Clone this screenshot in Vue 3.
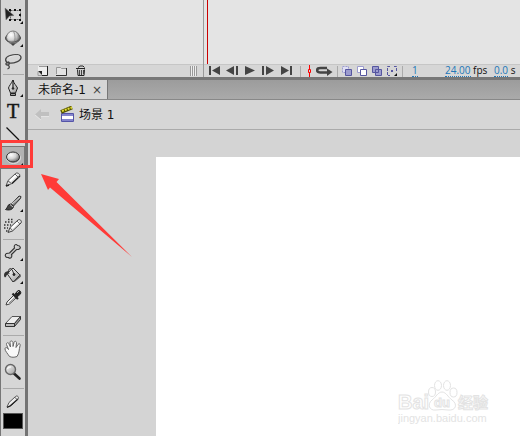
<script setup>
const tools = [
  ['transform', 'sphere', 'lasso'],
  ['pen', 'text', 'line', 'oval', 'pencil', 'brush', 'spray'],
  ['bone', 'bucket', 'dropper', 'eraser'],
  ['hand', 'zoom'],
]
const labels = {
  transform: 'Free Transform', sphere: '3D Rotation', lasso: 'Lasso', pen: 'Pen', text: 'Text', line: 'Line',
  oval: 'Oval', pencil: 'Pencil', brush: 'Brush', spray: 'Deco', bone: 'Bone', bucket: 'Paint Bucket',
  dropper: 'Eyedropper', eraser: 'Eraser', hand: 'Hand', zoom: 'Zoom',
}
const flyout = ['transform', 'sphere', 'pen', 'oval', 'brush', 'bone', 'bucket']
const playback = [
  { label: 'First frame', d: 'M1 1h2v9h-2zM12 1v9L4 5.5z' },
  { label: 'Step back', d: 'M0 5.5L8 1v9zM10 1h2v9h-2z' },
  { label: 'Play', d: 'M1 1L11 5.5L1 10z' },
  { label: 'Step forward', d: 'M0 1h2v9h-2zM4 1L12 5.5L4 10z' },
  { label: 'Last frame', d: 'M1 1L9 5.5L1 10zM10 1h2v9h-2z' },
]
</script>

<template>
  <div class="app">
    <svg class="defs" width="0" height="0" aria-hidden="true">
      <defs>
        <radialGradient id="ball" cx=".35" cy=".3" r=".75"><stop offset="0" stop-color="#fff" /><stop offset=".5" stop-color="#d4d4d4" /><stop offset="1" stop-color="#666" /></radialGradient>
        <linearGradient id="metal" x2="1" y2="1"><stop offset="0" stop-color="#fff" /><stop offset="1" stop-color="#999" /></linearGradient>
      </defs>
    </svg>
    <aside class="toolbar">
      <div v-for="(group, g) in tools" :key="g" class="group" :class="'group' + g">
        <button v-for="t in group" :key="t" class="tool" :class="{ active: t === 'oval' }" :aria-label="labels[t]">
          <svg width="24" height="23" viewBox="0 0 24 23" fill="none" stroke="#222">
            <g v-if="t === 'transform'">
              <path d="M9.5 6.5h10v9h-10z" stroke-dasharray="2 1" stroke="#666" />
              <path d="M8 5h2v2h-2zM13 5h2v2h-2zM18 5h2v2h-2zM18 10h2v2h-2zM18 15h2v2h-2zM13 15h2v2h-2zM8 15h2v2h-2z" fill="#111" stroke="none" />
              <path d="M4 4L13 11.5L8.5 12L5 16z" fill="#222" stroke="#777" stroke-width=".5" />
            </g>
            <g v-else-if="t === 'sphere'">
              <ellipse cx="12" cy="11" rx="7.5" ry="4.5" fill="#888" stroke="#444" />
              <circle cx="12" cy="10.5" r="6.5" fill="url(#ball)" stroke="#666" stroke-width=".8" />
              <path d="M4.5 11.5C6 15 10 15.500 13 15S18.500 13 19.500 11" stroke="#555" />
              <path d="M12.500 4.500C14.500 8 14.500 13 12.500 18" stroke="#777" stroke-width=".7" />
              <path d="M9.500 16.500h5L12 19z" fill="#444" stroke="none" />
            </g>
            <g v-else-if="t === 'lasso'" stroke="#444" stroke-width="1.3">
              <path d="M7.5 13C3 11 4 7 9 5.5S20 4 20 7.5S13 14 7.5 13C4.5 12 4 15 6.5 15S9 12 7 12M6.500 15C9 16 9 18 6.500 19" />
              <path d="M8 7.500C12 5.500 17 4.500 18.500 6.500" stroke="#eee" stroke-width=".7" />
            </g>
            <g v-else-if="t === 'pen'">
              <path d="M12 3C10 7 8 9 7.5 11L9.5 16h5L16.5 11C15 8 13 7 12 3z" fill="url(#metal)" />
              <path d="M12 3v8" stroke-width="1.2" /><circle cx="12" cy="11.5" r=".8" fill="#111" />
              <path d="M9.500 16.500h5v2h-5z" fill="#222" /><path d="M10 17.500h4" stroke="#999" />
            </g>
            <path v-else-if="t === 'line'" d="M5.5 4.5L18 17" stroke="#111" stroke-width="1.2" />
            <g v-else-if="t === 'oval'"><ellipse cx="12.500" cy="12" rx="7" ry="5.5" stroke="#ddd" /><ellipse cx="12" cy="11" rx="6.5" ry="5" fill="url(#ball)" stroke="#333" /></g>
            <g v-else-if="t === 'pencil'">
              <path d="M5 17L7 11.5L14.5 4.5C16 3 20 5 18.5 7.5L11 14.5z" fill="#ddd" stroke="#555" />
              <path d="M9 12L16 5.5" stroke="#fff" stroke-width="2" /><path d="M11 14.5L19 7M5 17l3-1" stroke="#222" stroke-width="1.4" /><path d="M14 5l3.500 3.500M7 12l3.500 2.500" stroke="#666" />
            </g>
            <g v-else-if="t === 'brush'">
              <path d="M10.5 12L18 4L20 4.5L19.5 6.5L12.5 14z" fill="#888" stroke="#333" /><path d="M11 12L19 5" stroke="#ddd" />
              <path d="M4.5 17.5C7 16 6 12.500 9.500 12L12.500 14.500C12 18 7.500 18.500 4.500 17.500z" fill="#444" /><path d="M9 12.500l3 2.500" stroke="#ccc" />
            </g>
            <g v-else-if="t === 'spray'">
              <path d="M4 7h8M3 10h7M3 13h4M5 16h2M7 4.500h6" stroke="#333" stroke-width="1.5" stroke-dasharray="1.500 1.500" />
              <path d="M7 17.500L9 12.500L17 5C18.500 3.500 21.500 6 20 8L11.500 16z" fill="#ddd" stroke="#444" /><path d="M11 13L18 6.500" stroke="#fff" stroke-width="2" /><path d="M16 6l3 3M9 13l3 3" stroke="#777" />
            </g>
            <path v-else-if="t === 'bone'" d="M8.5 12L13.5 7C12.5 4 15 2.500 16.500 4.500C19.500 4.500 20.500 7.500 17.500 8.500L15.500 8.500L10.500 13.500C11.500 16 9.500 18.500 7.500 16.500C4 17 3.500 13.500 5.500 12.500z" fill="url(#metal)" stroke="#333" stroke-width="1.1" />
            <g v-else-if="t === 'bucket'">
              <path d="M6 9.5L12 4L19 11L12 18z" fill="url(#metal)" stroke="#333" /><path d="M8 10C6 6 9 3 11 5.5L13 10" stroke="#333" />
              <path d="M9 7C5 7 3 8.500 3 11C3 14 5 14 5.500 11.500L7.500 9z" fill="#333" stroke="none" /><circle cx="13" cy="10.5" r="1" fill="#222" /><path d="M19 10.500v2L13 17.500" stroke="#555" stroke-width="1.5" />
            </g>
            <g v-else-if="t === 'dropper'">
              <path d="M5 18L6 15L13 8L15.5 10.5L8.5 17z" fill="#eee" stroke="#444" /><path d="M8 16L15 9.5" stroke="#888" />
              <path d="M11.5 6.5L17 12" stroke-width="2.2" /><path d="M14 7L17 3.5C19 3 20.5 5 19.5 7L16 10z" fill="#222" /><path d="M16 6l2-2" stroke="#aaa" />
            </g>
            <g v-else-if="t === 'eraser'">
              <path d="M4.5 13.5L11 6.5h8.5L13.5 13.5z" fill="#eee" stroke="#555" /><path d="M4.5 13.5v3h9v-3zM13.5 16.5L19.5 9.5v-3L13.5 13.5z" fill="#999" stroke="#333" /><path d="M5 15h8" stroke="#ddd" />
            </g>
            <path v-else-if="t === 'hand'" d="M8.5 18.5C7 16 4 13 4 11C4 9 6 9 7.5 11.5L5.5 6.5C5 4.5 7.5 4 8 6L9.500 9L9 4.500C9 2.500 11.500 2.500 12 4.500v4L13 4.500C13.500 2.500 15.500 3 15.500 5L15 9.500L17 6.500C18 5 20 6 19 8C18 11 18.500 15 16 18.500C13 19.500 11 19.500 8.500 18.500z" fill="#f8f8f8" stroke="#666" />
            <g v-else-if="t === 'zoom'">
              <path d="M12.5 12L18.500 17.500" stroke="#222" stroke-width="2.600" stroke-linecap="round" /><circle cx="9.5" cy="8.5" r="5" fill="url(#metal)" stroke="#666" stroke-width="1.4" /><path d="M6.500 8C7 6.500 8.500 6 10 6" stroke="#fff" />
            </g>
            <path v-if="flyout.includes(t)" d="M22 17v3h-3z" fill="#111" stroke="none" />
          </svg>
          <span v-if="t === 'text'" class="glyph">T</span>
        </button>
      </div>
      <div class="group colors">
        <svg width="24" height="23" viewBox="0 0 24 23" fill="none"><path d="M6 16L8 11.5L14.5 5.5C16 4 18.5 6 17 8L10.5 14.5z" fill="#eee" stroke="#555" /><path d="M6 16.500l3-1.500L17 8" stroke="#222" stroke-width="1.3" /><path d="M13.500 6l3 3" stroke="#555" /></svg>
        <button class="swatch" aria-label="Stroke color"></button>
      </div>
    </aside>

    <main class="work">
      <section class="timeline">
        <div class="layers">
          <div class="rows"></div>
          <div class="bar layerbar">
            <button aria-label="New layer"><svg width="12" height="12" viewBox="0 0 12 12"><path d="M1 1h9v9H5L1 6z" fill="#eee" /><path d="M10.5 1v9.5H4" fill="none" stroke="#222" /><path d="M1 6h4v4z" fill="#222" /><path d="M2 1.5h8M1 6.500v4h4" fill="none" stroke="#999" /></svg></button>
            <button aria-label="New folder"><svg width="12" height="12" viewBox="0 0 12 12"><path d="M1 2h4l1 2h5v6H1z" fill="#e3e3e3" /><path d="M.5 9V2.500h4l1 1h5" fill="none" stroke="#999" /><path d="M10.5 3v7.500H0" fill="none" stroke="#333" /></svg></button>
            <button aria-label="Delete"><svg width="12" height="12" viewBox="0 0 12 12" fill="none" stroke="#222"><path d="M1 3.5h9M3 2.500L5 1h3l1.500 1.500" /><path d="M2.500 4.500l.5 6h6l.5-6" fill="#ccc" /><path d="M4.500 5v5M6.500 5v5M8.500 5v4" stroke="#444" /></svg></button>
            <span class="grip"></span>
          </div>
        </div>
        <div class="frames">
          <div class="rows"><i class="playhead"></i></div>
          <div class="bar framebar">
            <div class="play">
              <button v-for="p in playback" :key="p.label" :aria-label="p.label"><svg width="12" height="12" viewBox="0 0 12 12"><path :d="p.d" fill="#444" /></svg></button>
            </div>
            <i class="rule"></i>
            <button class="center" aria-label="Center frame"><svg width="5" height="12" viewBox="0 0 5 12" fill="none" stroke="#f00"><path d="M2.5 0v4M2.5 8v4M1.5 4.500h2v3h-2z" /></svg></button>
            <button aria-label="Loop"><svg width="17" height="12" viewBox="0 0 17 12"><path d="M11 3H4.5C0 3 0 7.5 4.5 7.5H12" fill="none" stroke="#444" stroke-width="2.5" /><path d="M11 3.5L16.5 7L11 11z" fill="#444" /></svg></button>
            <i class="rule"></i>
            <div class="onion">
              <button aria-label="Onion skin"><svg width="11" height="11" viewBox="0 0 11 11" stroke="#5656a0"><path d="M.5.5h6v6h-6z" fill="#e0e0f4" stroke="#9c9cce" stroke-dasharray="2 1" /><path d="M3.500 3.500h6v6h-6z" fill="#9c9cce" /></svg></button>
              <button aria-label="Onion skin outlines"><svg width="11" height="11" viewBox="0 0 11 11" stroke="#5656a0"><path d="M.5.5h6v6h-6z" fill="#fff" stroke="#9c9cce" /><path d="M3.500 3.500h6v6h-6z" fill="#fff" /></svg></button>
              <button aria-label="Edit multiple frames"><svg width="11" height="11" viewBox="0 0 11 11" stroke="#5656a0"><path d="M.5.5h6v6h-6zM3.500 3.500h6v6h-6z" fill="#9c9cce" /></svg></button>
              <button aria-label="Modify markers"><svg width="11" height="11" viewBox="0 0 11 11"><path d="M3 .5H.5v9H3M7 .5h2.500V5" fill="none" stroke="#5656a0" stroke-dasharray="3 1" /><path d="M4 4h2v2H4z" fill="#5656a0" /><path d="M10 7v3H7z" fill="#111" /></svg></button>
            </div>
            <i class="rule"></i>
            <div class="status"><span class="frame"><a href="#">1</a></span><span class="rate"><a href="#">24.00</a> fps</span><span><a href="#">0.0</a> s</span></div>
          </div>
        </div>
      </section>

      <nav class="tabs"><div class="tab"><span>未命名-1</span><button aria-label="Close">×</button></div></nav>
      <div class="scene">
        <button class="back" aria-label="Back"><svg width="14" height="12" viewBox="0 0 14 12"><path d="M0 5.500L6 0v3h8v4H6v4z" fill="#c0c0c0" /><path d="M6 11L0 6M6 7.500h8" stroke="#e4e4e4" /></svg></button>
        <svg width="15" height="17" viewBox="0 0 15 17"><path d="M1.500 7.500h12v8h-12z" fill="#fff" stroke="#5555a8" /><path d="M2 8h11v2H2zM2 13h11v2H2z" fill="#8585cc" /><path d="M1 6L12 1.500" stroke="#555500" stroke-width="4" /><path d="M2 5L12 1.500" stroke="#e2dc35" stroke-width="2" stroke-dasharray="2 1" /></svg>
        <span>场景 1</span>
      </div>
      <section class="stage">
        <div class="canvas">
          <svg class="watermark" width="94" height="46" viewBox="0 0 94 46" fill="#fff" stroke="#e3e3e3">
            <ellipse cx="34" cy="12" rx="3.5" ry="4.5" /><ellipse cx="40" cy="5.5" rx="3.5" ry="4.8" /><ellipse cx="49" cy="5.5" rx="3.5" ry="4.8" /><ellipse cx="55.500" cy="12.500" rx="3.500" ry="4.500" />
            <path d="M44 12C40 12 38 17 34 20C29 24 31 31 38 30Q44 29 50 30C58 31 60 24 54 20C50 17 48 12 44 12z" />
            <text x="0" y="29" class="logo">Bai</text><text x="36" y="27" class="du">du</text><text x="60" y="28" class="cn">经验</text><text x="0" y="42" class="url">jingyan.baidu.com</text>
          </svg>
        </div>
      </section>
    </main>

    <div class="highlight"></div>
    <svg class="pointer" width="92" height="84" viewBox="0 0 92 84"><path d="M0 0L18 5L15.500 8L91 83L9 13.500L7 16z" fill="#ff3b38" /></svg>
  </div>
</template>

<style>
body { margin: 0; }
</style>

<style scoped>
.app { position: relative; display: flex; min-height: 100vh; overflow: hidden; background: #d4d4d4; color: #111; font: 12px/14px "DejaVu Sans", "Noto Sans CJK SC", sans-serif; }
.app * { box-sizing: border-box; }
.defs { position: absolute; }
svg { display: block; flex: none; }
button { border: 0; padding: 0; margin: 0; background: none; color: inherit; font: inherit; }
.toolbar { flex: none; width: 28px; padding-top: 4px; border-left: 1px solid #777; border-right: 3px solid #737373; background: #d6d6d6; }
.group { display: flex; flex-direction: column; padding-bottom: 1px; }
.group + .group::before { content: ""; height: 1px; margin: 0 1px 2px 2px; background: #aaa; }
.group.group2::before { margin-bottom: 1px; }
.group.group2 { padding-bottom: 2px; }
.group.group3 { padding-bottom: 4px; }
.tool { position: relative; display: block; width: 24px; height: 23px; }
.tool.active { background: #b2b2b2; box-shadow: inset 0 0 0 1px #777; }
.glyph { position: absolute; inset: 0; font: 400 20px/23px "Liberation Serif", serif; text-align: center; color: #111; -webkit-text-stroke: 0.5px #222; }
.swatch { width: 20px; height: 16px; margin: -1px 0 0 2px; background: #000; border: 1px solid #555; }
.work { flex: 1; min-width: 0; display: flex; flex-direction: column; }
.timeline { display: flex; height: 80px; flex: none; border-bottom: 3px solid #777; }
.layers { width: 176px; flex: none; display: flex; flex-direction: column; border-right: 1px solid #999; }
.frames { flex: 1; min-width: 0; display: flex; flex-direction: column; }
.rows { flex: 1; background: #e4e4e4; }
.playhead { display: block; width: 1px; height: 100%; margin-left: 3px; background: #c00; }
.bar { height: 13px; display: flex; align-items: center; border-top: 1px solid #c6c6c6; background: #d6d6d6; }
.layerbar { padding: 0 6px 0 9px; gap: 7px; }
.grip { width: 7px; height: 10px; margin-left: auto; background: repeating-linear-gradient(90deg, #999 0 1px, #eee 1px 2px); }
.framebar { gap: 4px; padding-left: 4px; }
.play { display: flex; gap: 6px; margin-right: 4px; }
.center { margin-left: 2px; }
.rule { width: 1px; height: 11px; background: #aaa; }
.onion { display: flex; gap: 4px; }
.status { display: flex; padding-left: 5px; white-space: nowrap; font: 10px/11px "Open Sans", sans-serif; }
.status a { display: inline-block; height: 12px; color: #2277b8; text-decoration: none; border-bottom: 1px dotted #2277b8; }
.frame { width: 33px; }
.rate { width: 49px; }
.tabs { flex: none; height: 20px; display: flex; background: linear-gradient(#9c9c9c, #aaa); border-bottom: 1px solid #888; }
.tab { display: flex; align-items: center; gap: 6px; height: 19px; padding: 0 5px 0 10px; background: #d6d6d6; border-right: 1px solid #777; }
.tab button { color: #444; }
.scene { flex: none; height: 30px; display: flex; align-items: center; padding: 0 7px; border-bottom: 1px solid #aaa; background: #d6d6d6; }
.back { margin-right: 11px; }
.scene span { margin-left: 4px; }
.stage { flex: 1; display: flex; padding: 27px 0 0 128px; }
.canvas { flex: 1; position: relative; background: #fff; }
.watermark { position: absolute; right: 28px; bottom: 10px; }
.logo { font: 700 20px "Liberation Sans", sans-serif; }
.du { font: 700 13px "Liberation Sans", sans-serif; }
.cn { font: 700 15px "Noto Sans CJK SC", sans-serif; }
.url { font: 11px "Liberation Sans", sans-serif; fill: #e3e3e3; stroke: none; }
.highlight { position: absolute; left: -1px; top: 140px; width: 34px; height: 28px; border: 3px solid #ff3b38; }
.pointer { position: absolute; left: 41px; top: 174px; }
</style>
